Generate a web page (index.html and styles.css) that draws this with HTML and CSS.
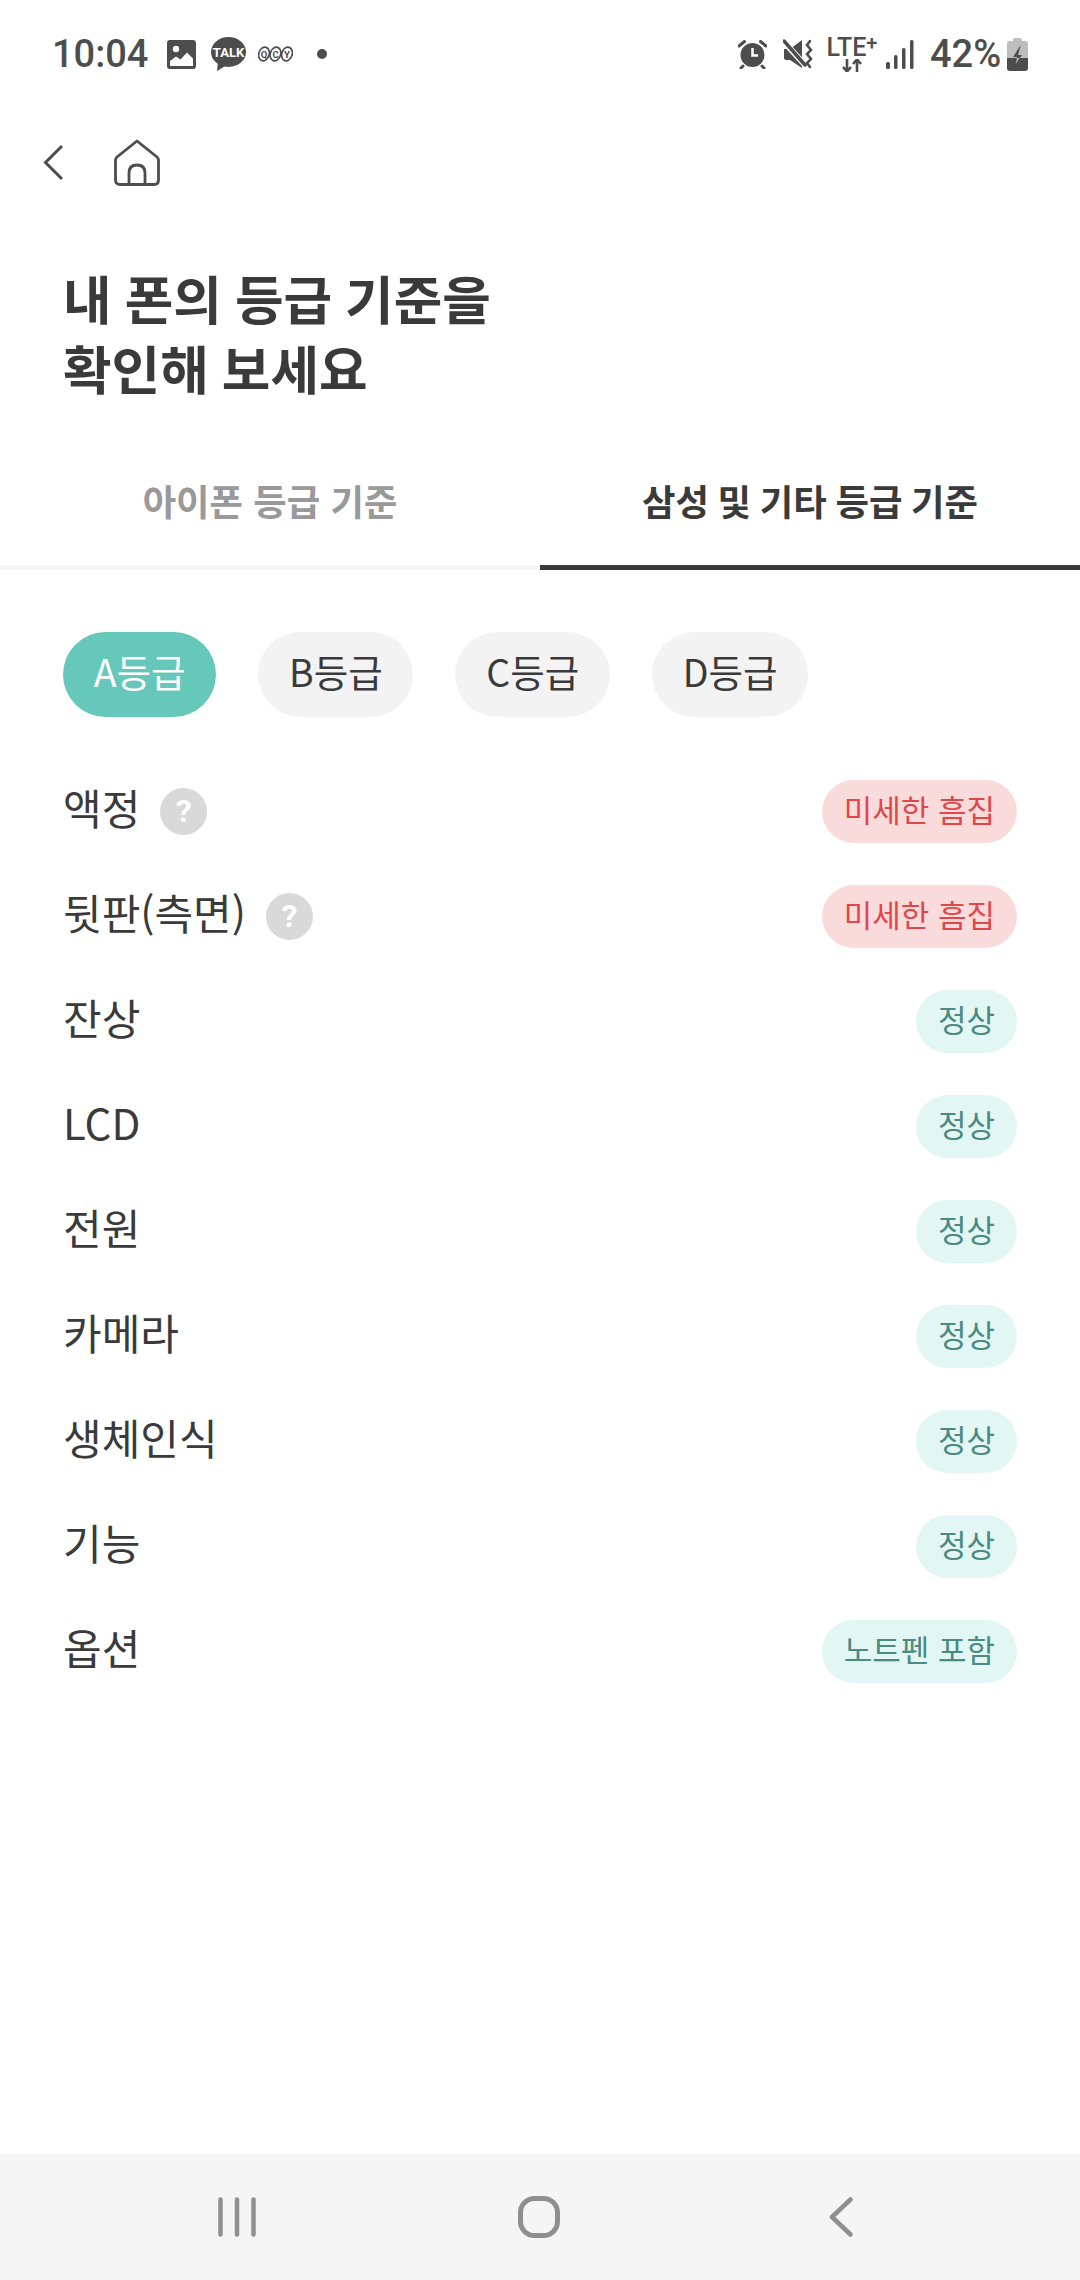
FILE: index.html
```html
<!DOCTYPE html>
<html lang="ko">
<head>
  <meta charset="UTF-8">
  <title>등급 기준</title>
  <link rel="stylesheet" href="styles.css">
</head>
<body>

  <div class="status-bar">
    <div class="status-left">
      <span class="time">10:04</span>
      <svg class="ic-image" width="29" height="29" viewBox="0 0 29 29">
        <rect width="29" height="29" rx="3" fill="#4d4d4d"/>
        <circle cx="9" cy="9" r="3.2" fill="#fff"/>
        <path d="M3 26V21L9 16.500L13.500 19.500L20 12.500L26 18.500V26Z" fill="#fff"/>
      </svg>
      <svg class="ic-talk" width="35" height="34" viewBox="0 0 35 34">
        <ellipse cx="17.500" cy="15" rx="17.500" ry="15" fill="#4d4d4d"/>
        <path d="M7 24L6 34L16 28Z" fill="#4d4d4d"/>
        <text x="17.500" y="20" class="talk-text" text-anchor="middle">TALK</text>
      </svg>
      <svg class="ic-qcy" width="35" height="16" viewBox="0 0 35 16">
        <ellipse cx="6" cy="8" rx="5.200" ry="7" transform="rotate(18 6 8)" fill="#fff" stroke="#4d4d4d" stroke-width="1.700"/>
        <ellipse cx="17.500" cy="8" rx="5.200" ry="7" transform="rotate(18 17.500 8)" fill="#fff" stroke="#4d4d4d" stroke-width="1.700"/>
        <ellipse cx="29" cy="8" rx="5.200" ry="7" transform="rotate(18 29 8)" fill="#fff" stroke="#4d4d4d" stroke-width="1.700"/>
        <text x="6" y="11.500" class="qcy-text" text-anchor="middle">Q</text>
        <text x="17.500" y="11.500" class="qcy-text" text-anchor="middle">C</text>
        <text x="29" y="11.500" class="qcy-text" text-anchor="middle">Y</text>
      </svg>
      <span class="dot"></span>
    </div>
    <div class="status-right">
      <svg class="ic-alarm" width="29" height="30" viewBox="0 0 29 30">
        <circle cx="14.500" cy="16" r="12" fill="#4d4d4d"/>
        <path d="M14.500 9V16.500H20" fill="none" stroke="#fff" stroke-width="2.500"/>
        <path d="M1 7L6.500 2.500M28 7L22.500 2.500M5 27L3 29M24 27L26 29" fill="none" stroke="#4d4d4d" stroke-width="3" stroke-linecap="round"/>
      </svg>
      <svg class="ic-mute" width="30" height="30" viewBox="0 0 30 30">
        <path d="M1 10H7L19 1V29L7 21H3Q1 21 1 19Z" fill="#4d4d4d"/>
        <path d="M1 3L23 27" stroke="#fff" stroke-width="6"/>
        <path d="M1 2L22 26" stroke="#4d4d4d" stroke-width="3.500" stroke-linecap="round"/>
        <path d="M27 2L24 6L28 11L24 15L28 20L24 24L27 28" fill="none" stroke="#4d4d4d" stroke-width="2.500" stroke-linecap="round"/>
      </svg>
      <div class="lte">
        <span class="lte-text">LTE<sup>+</sup></span>
        <svg width="20" height="13" viewBox="0 0 20 13">
          <path d="M5 0V12M1 8L5 12.500L9 8M15 13V1M11 5L15 .5L19 5" fill="none" stroke="#4d4d4d" stroke-width="2.600"/>
        </svg>
      </div>
      <svg class="ic-signal" width="28" height="29" viewBox="0 0 28 29">
        <rect x="0" y="22" width="4" height="7" rx="1.500" fill="#4d4d4d"/>
        <rect x="8" y="15" width="3.500" height="14" rx="1.500" fill="#4d4d4d"/>
        <rect x="16" y="8" width="3.500" height="21" rx="1.500" fill="#4d4d4d"/>
        <rect x="24" y="0" width="3.500" height="29" rx="1.500" fill="#4d4d4d"/>
      </svg>
      <span class="percent">42%</span>
      <svg class="ic-battery" width="21" height="33" viewBox="0 0 21 33">
        <path d="M6 2Q6 0 8 0H13Q15 0 15 2V3H18Q21 3 21 6V20H0V6Q0 3 3 3H6Z" fill="#bdbdbd"/>
        <path d="M0 20H21V30Q21 33 18 33H3Q0 33 0 30Z" fill="#4d4d4d"/>
        <path d="M13 8L6 19H10L7.500 28L15 17H11L13.500 8Z" fill="#4d4d4d"/>
        <path d="M10 20H12.500L8.500 26Z" fill="#bdbdbd"/>
      </svg>
    </div>
  </div>

  <div class="header">
    <svg class="back" width="21" height="37" viewBox="0 0 21 37">
      <path d="M19 2L2.500 18.500L19 35" fill="none" stroke="#4d4d4d" stroke-width="3"/>
    </svg>
    <svg class="home" width="46" height="47" viewBox="0 0 46 47">
      <path d="M23 2L43 18Q44.500 19.500 44.500 21V41Q44.500 45.500 40 45.500H6Q1.500 45.500 1.500 41V21Q1.500 19.500 3 18Z" fill="none" stroke="#4d4d4d" stroke-width="2.800" stroke-linejoin="round"/>
      <path d="M15 45V34Q15 26 23 26Q31 26 31 34V45" fill="none" stroke="#4d4d4d" stroke-width="2.800"/>
    </svg>
  </div>

  <h1 class="title">내 폰의 등급 기준을<br>확인해 보세요</h1>

  <div class="tabs">
    <div class="tab">아이폰 등급 기준</div>
    <div class="tab active">삼성 및 기타 등급 기준</div>
  </div>

  <div class="grades">
    <div class="grade active">A등급</div>
    <div class="grade">B등급</div>
    <div class="grade">C등급</div>
    <div class="grade">D등급</div>
  </div>

  <div class="list">
    <div class="row">
      <div class="row-label">액정 <span class="help">?</span></div>
      <span class="badge bad">미세한 흠집</span>
    </div>
    <div class="row">
      <div class="row-label">뒷판(측면) <span class="help">?</span></div>
      <span class="badge bad">미세한 흠집</span>
    </div>
    <div class="row">
      <div class="row-label">잔상</div>
      <span class="badge">정상</span>
    </div>
    <div class="row">
      <div class="row-label">LCD</div>
      <span class="badge">정상</span>
    </div>
    <div class="row">
      <div class="row-label">전원</div>
      <span class="badge">정상</span>
    </div>
    <div class="row">
      <div class="row-label">카메라</div>
      <span class="badge">정상</span>
    </div>
    <div class="row">
      <div class="row-label">생체인식</div>
      <span class="badge">정상</span>
    </div>
    <div class="row">
      <div class="row-label">기능</div>
      <span class="badge">정상</span>
    </div>
    <div class="row">
      <div class="row-label">옵션</div>
      <span class="badge">노트펜 포함</span>
    </div>
  </div>

  <div class="nav-bar">
    <svg width="38" height="40" viewBox="0 0 38 40">
      <path d="M2.500 2.500V37.500M19 2.500V37.500M35.500 2.500V37.500" fill="none" stroke="#8f8f8f" stroke-width="4.500" stroke-linecap="round"/>
    </svg>
    <svg class="nav-home" width="42" height="42" viewBox="0 0 42 42">
      <rect x="2.500" y="2.500" width="37" height="37" rx="14" fill="none" stroke="#8f8f8f" stroke-width="5"/>
    </svg>
    <svg width="24" height="40" viewBox="0 0 24 40">
      <path d="M21.500 2.500L3 20L21.500 37.500" fill="none" stroke="#8f8f8f" stroke-width="4.500" stroke-linecap="round" stroke-linejoin="round"/>
    </svg>
  </div>

</body>
</html>
```

FILE: styles.css
```css
* {
  box-sizing: border-box;
}

body {
  margin: 0;
  width: 1080px;
  height: 2280px;
  display: flex;
  flex-direction: column;
  background-color: #fff;
  color: #3a3a3a;
  font-family: "Noto Sans CJK KR", sans-serif;
  overflow: hidden;
}

/* status bar */
.status-bar {
  height: 108px;
  display: flex;
  justify-content: space-between;
  align-items: center;
  padding: 0 52px 0 52px;
  color: #4d4d4d;
  font-family: Roboto, sans-serif;
}

.status-left,
.status-right {
  display: flex;
  align-items: center;
}

.time {
  font-size: 38px;
  line-height: 44px;
  font-weight: 500;
  width: 97px;
  white-space: nowrap;
}

.ic-image {
  margin-left: 18px;
}

.ic-talk {
  margin-left: 15px;
}

.talk-text {
  font-family: Roboto, sans-serif;
  font-size: 13px;
  font-weight: 700;
  fill: #fff;
}

.ic-qcy {
  margin-left: 12px;
}

.qcy-text {
  font-family: Roboto, sans-serif;
  font-size: 9.500px;
  font-weight: 700;
  fill: #4d4d4d;
}

.dot {
  width: 10px;
  height: 10px;
  margin-left: 24px;
  border-radius: 50%;
  background-color: #4d4d4d;
}

.ic-mute {
  margin-left: 16px;
}

.lte {
  width: 52px;
  margin-left: 13px;
  display: flex;
  flex-direction: column;
  align-items: center;
}

.lte-text {
  font-size: 25px;
  line-height: 22px;
  font-weight: 500;
  white-space: nowrap;
}

.lte-text sup {
  font-size: 20px;
  line-height: 0;
  vertical-align: 6px;
}

.ic-signal {
  margin-left: 8px;
}

.percent {
  margin-left: 16px;
  width: 70px;
  font-size: 38px;
  line-height: 44px;
  font-weight: 500;
  white-space: nowrap;
}

.ic-battery {
  margin-left: 7px;
}

/* header */
.header {
  height: 110px;
  display: flex;
  align-items: center;
  padding: 0 0 2px 43px;
  gap: 50px;
}

.title {
  margin: 44px 0 0;
  padding-left: 63px;
  font-size: 52.800px;
  line-height: 70px;
  font-weight: 700;
  word-spacing: -1.700px;
}

/* tabs */
.tabs {
  margin-top: 53px;
  display: grid;
  grid-template-columns: 1fr 1fr;
}

.tab {
  height: 115px;
  padding-top: 18px;
  text-align: center;
  font-size: 36.400px;
  line-height: 54px;
  font-weight: 700;
  color: #999;
  border-bottom: 5px solid #f7f7f7;
}

.tab.active {
  color: #3a3a3a;
  border-bottom-color: #3a3a3a;
  word-spacing: -1.500px;
}

/* grade pills */
.grades {
  margin-top: 62px;
  padding-left: 63px;
  display: flex;
  gap: 42px;
}

.grade {
  height: 85px;
  padding: 0 30.750px;
  border-radius: 43px;
  background-color: #f3f3f3;
  font-size: 37.500px;
  line-height: 78px;
}

.grade.active {
  background-color: #66c8ba;
  color: #fff;
}

/* rows */
.list {
  margin-top: 42px;
  padding: 0 63px;
}

.row {
  height: 105px;
  display: flex;
  justify-content: space-between;
  align-items: center;
}

.row-label {
  display: flex;
  align-items: center;
  gap: 20px;
  margin-top: -9px;
  font-size: 42px;
  line-height: 60px;
}

.help {
  width: 47px;
  height: 47px;
  margin-top: 9px;
  border-radius: 50%;
  background-color: #d9d9d9;
  color: #fff;
  font-family: Roboto, sans-serif;
  font-size: 32px;
  line-height: 47px;
  font-weight: 700;
  text-align: center;
}

.badge {
  height: 63px;
  padding: 0 22px;
  border-radius: 32px;
  background-color: #e2f6f4;
  color: #4a8a80;
  font-size: 31px;
  line-height: 58px;
}

.badge.bad {
  background-color: #fadbdb;
  color: #e0474a;
}

/* android nav */
.nav-bar {
  margin-top: auto;
  height: 126px;
  padding-left: 218px;
  display: flex;
  align-items: center;
  background-color: #f5f5f5;
}

.nav-home {
  margin: 0 269px 0 262px;
}
```
